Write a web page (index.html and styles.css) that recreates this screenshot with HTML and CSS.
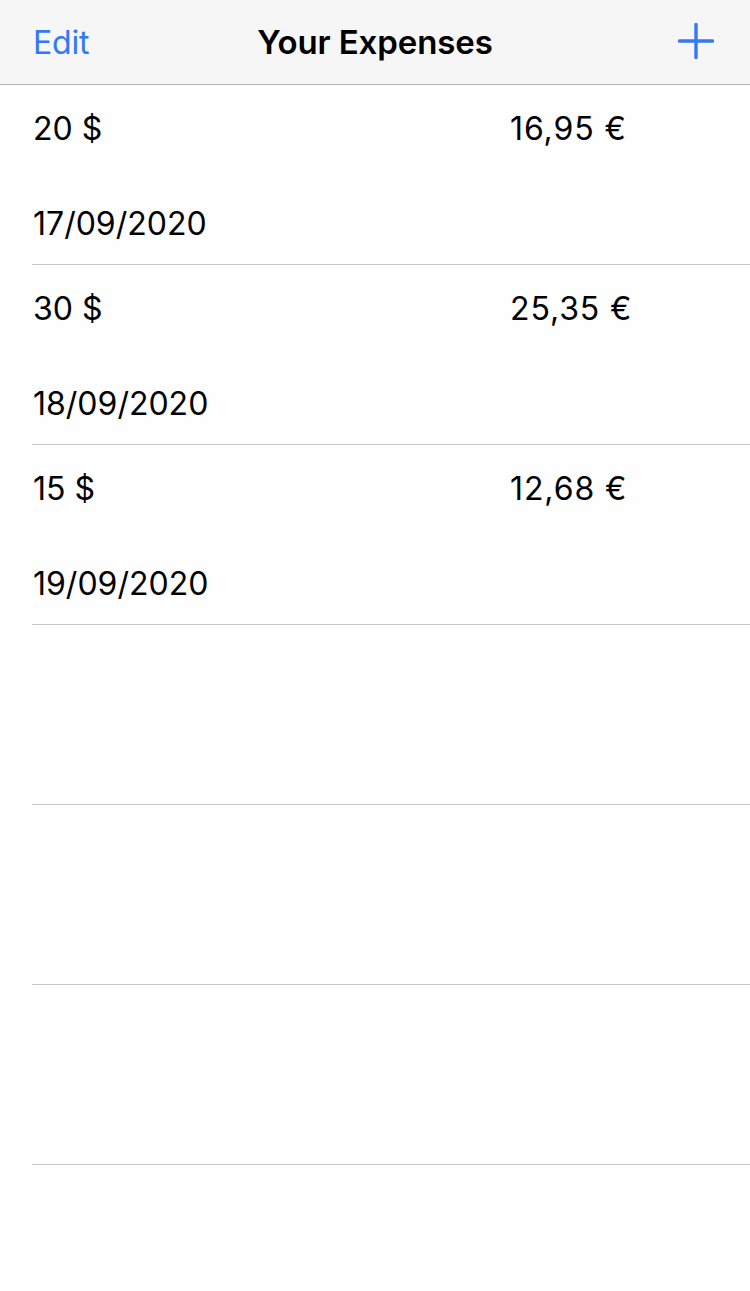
FILE: index.html
```html
<!DOCTYPE html>
<html>
<head>
<meta charset="utf-8">
<link rel="stylesheet" href="styles.css">
</head>
<body>
<header class="nav">
  <span class="nav-edit">Edit</span>
  <span class="nav-title">Your Expenses</span>
  <span class="nav-add">
    <svg width="36" height="36" viewBox="0 0 36 36"><path d="M18 1.5V34.5M1.5 18H34.5" stroke="#3478f6" stroke-width="3.4" stroke-linecap="round" fill="none"/></svg>
  </span>
</header>
<main class="list">
  <div class="row">
    <div class="line"><span class="amount">20 $</span><span class="conv">16,95 €</span></div>
    <div class="date">17/09/2020</div>
  </div>
  <div class="row">
    <div class="line"><span class="amount">30 $</span><span class="conv">25,35 €</span></div>
    <div class="date">18/09/2020</div>
  </div>
  <div class="row">
    <div class="line"><span class="amount">15 $</span><span class="conv">12,68 €</span></div>
    <div class="date">19/09/2020</div>
  </div>
  <div class="row"></div>
  <div class="row"></div>
  <div class="row"></div>
</main>
</body>
</html>
```
FILE: styles.css
```css
html, body {
  margin: 0;
  padding: 0;
  background: #fefefe;
  font-family: Inter, "Noto Sans", sans-serif;
  color: #000;
}
.nav {
  height: 84px;
  border-bottom: 1px solid #b4b4b4;
  background: #f6f6f6;
  display: flex;
  align-items: center;
  position: relative;
  padding: 0 33px;
}
.nav-edit {
  color: #3478f6;
  font-size: 32px;
  letter-spacing: -0.2px;
}
.nav-title {
  position: absolute;
  left: 0;
  right: 0;
  top: 0;
  bottom: 0;
  display: flex;
  align-items: center;
  justify-content: center;
  font-weight: 600;
  font-size: 33px;
  letter-spacing: -0.1px;
  pointer-events: none;
}
.nav-add {
  margin-left: auto;
  margin-right: 3px;
  margin-top: -2px;
  display: flex;
}
.list {
  padding-left: 32px;
}
.row {
  height: 179px;
  border-bottom: 1px solid #c8c8c8;
  padding-left: 1px;
}
.line {
  display: flex;
  padding-top: 25px;
  font-size: 32px;
  line-height: 38px;
}
.amount {
  width: 477px;
}
.conv {
  letter-spacing: 0.9px;
}
.date {
  margin-top: 57px;
  font-size: 32px;
  line-height: 38px;
}
```
